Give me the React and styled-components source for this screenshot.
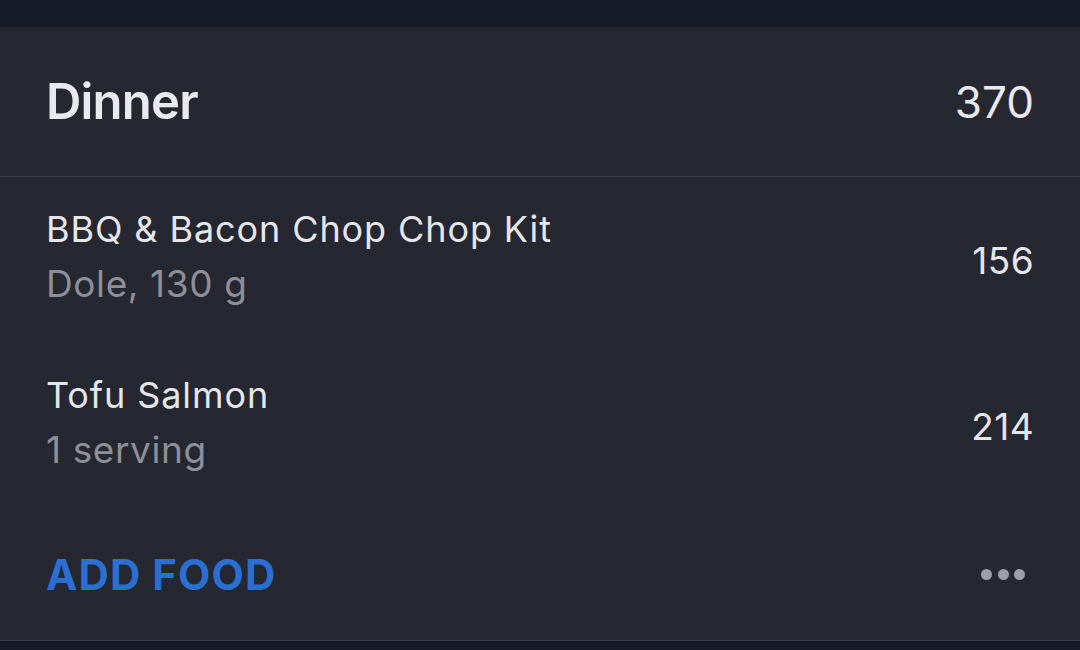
import styled, { createGlobalStyle } from 'styled-components';

const Global = createGlobalStyle`
  html, body {
    margin: 0;
    padding: 0;
    background: #161926;
  }
  body {
    font-family: Inter, "Noto Sans", sans-serif;
    -webkit-font-smoothing: antialiased;
  }
`;

const Page = styled.div`
  width: 1080px;
  height: 650px;
  background: #161926;
  padding-top: 27px;
  box-sizing: border-box;
  overflow: hidden;
`;

const Card = styled.section`
  background: #252731;
  border-bottom: 1px solid #3b3d48;
`;

const Header = styled.header`
  height: 149px;
  display: flex;
  align-items: center;
  justify-content: space-between;
  padding: 0 46px;
  border-bottom: 1px solid #393b46;
`;

const Title = styled.h2`
  margin: 0;
  font-size: 49px;
  font-weight: 600;
  color: #e9e9ee;
  letter-spacing: -0.8px;
`;

const Total = styled.span`
  font-size: 44px;
  font-weight: 400;
  color: #e9e9ee;
`;

const Item = styled.div`
  height: 166px;
  display: flex;
  align-items: center;
  justify-content: space-between;
  padding: 0 46px;
`;

const Info = styled.div`
  display: flex;
  flex-direction: column;
  gap: 13px;
  margin-top: -7px;
`;

const Name = styled.span`
  font-size: 36px;
  color: #e6e6eb;
  line-height: 42px;
  letter-spacing: 0.9px;
`;

const Detail = styled.span`
  font-size: 37px;
  color: #8e8f99;
  line-height: 42px;
  letter-spacing: 0.6px;
`;

const Cal = styled.span`
  font-size: 37px;
  color: #e6e6eb;
  letter-spacing: 0.4px;
`;

const Footer = styled.div`
  height: 131px;
  display: flex;
  align-items: center;
  justify-content: space-between;
  padding: 0 46px;
`;

const AddButton = styled.button`
  background: none;
  border: none;
  padding: 0;
  font-family: inherit;
  font-size: 42px;
  font-weight: 700;
  color: #2a6fd1;
  letter-spacing: 1.1px;
  cursor: pointer;
`;

const More = styled.div`
  display: flex;
  gap: 5.5px;
  margin-right: 9px;
`;

const Dot = styled.span`
  width: 11px;
  height: 11px;
  border-radius: 50%;
  background: #9c9eac;
`;

const foods = [
  { name: 'BBQ & Bacon Chop Chop Kit', detail: 'Dole, 130 g', cal: 156 },
  { name: 'Tofu Salmon', detail: '1 serving', cal: 214 },
];

export default function App() {
  return (
    <Page>
      <Global />
      <Card>
        <Header>
          <Title>Dinner</Title>
          <Total>370</Total>
        </Header>
        {foods.map((f) => (
          <Item key={f.name}>
            <Info>
              <Name>{f.name}</Name>
              <Detail>{f.detail}</Detail>
            </Info>
            <Cal>{f.cal}</Cal>
          </Item>
        ))}
        <Footer>
          <AddButton>ADD FOOD</AddButton>
          <More>
            <Dot />
            <Dot />
            <Dot />
          </More>
        </Footer>
      </Card>
    </Page>
  );
}
